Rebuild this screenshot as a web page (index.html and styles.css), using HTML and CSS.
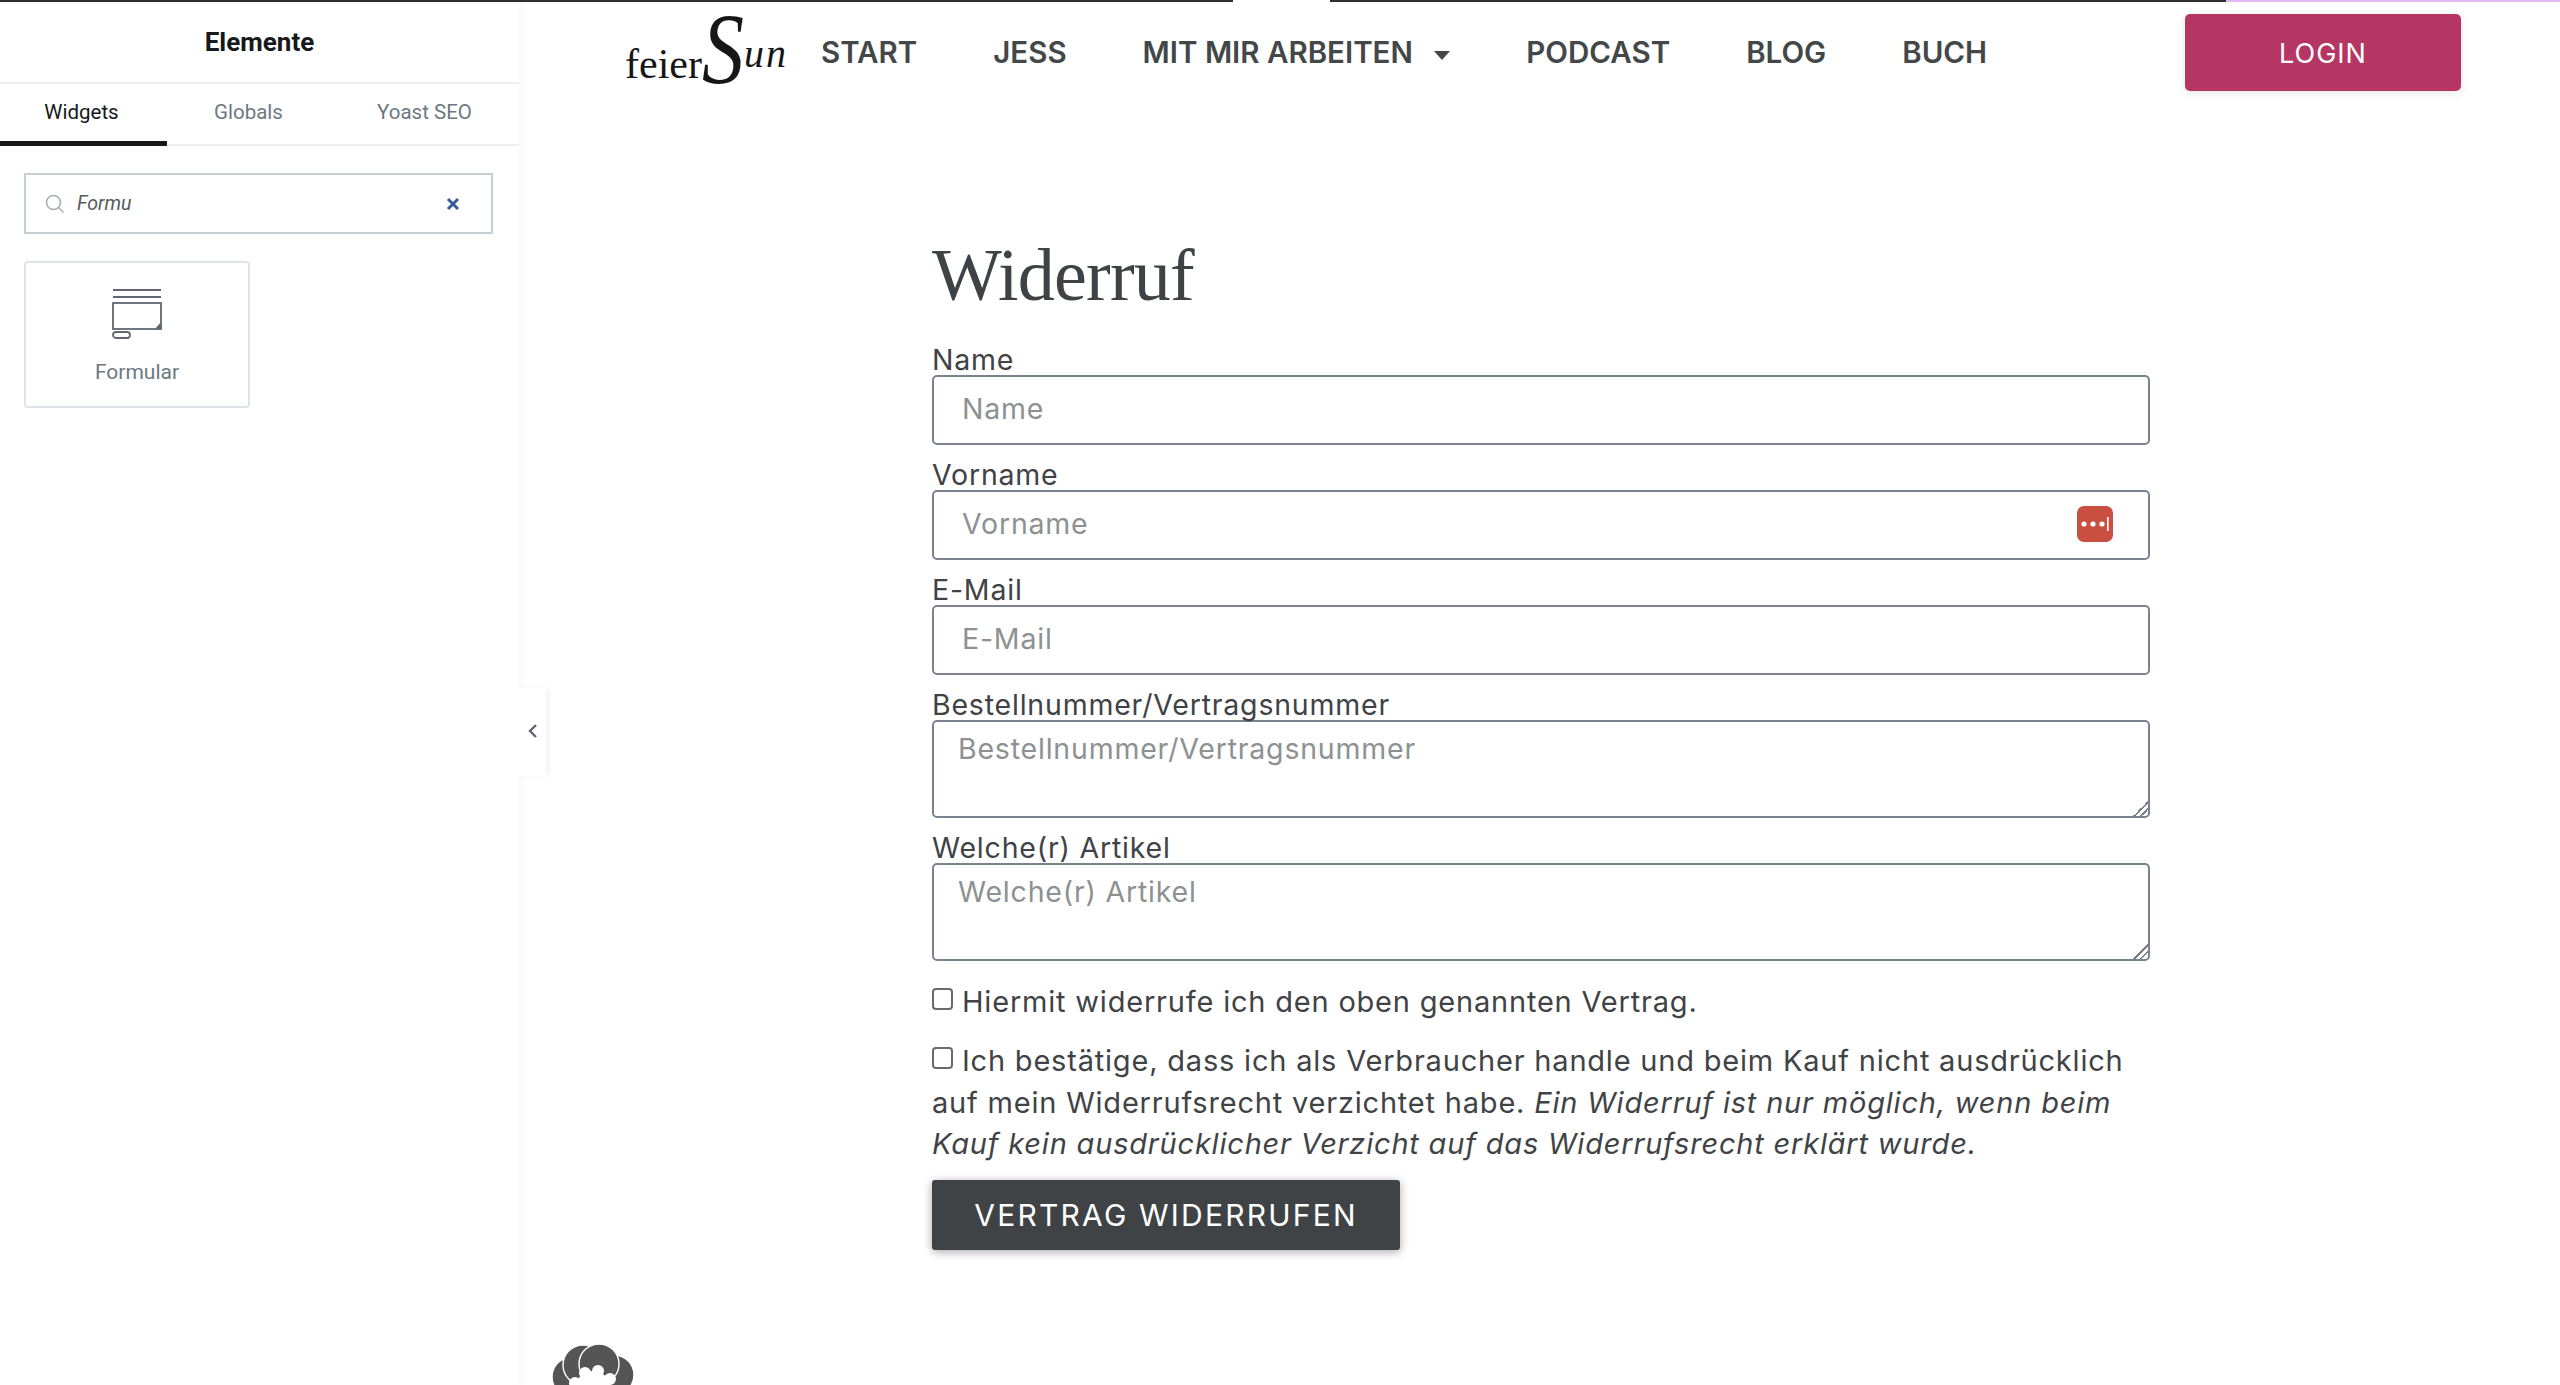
FILE: index.html
```html
<!DOCTYPE html>
<html lang="de">
<head>
  <meta charset="UTF-8">
  <title>Widerruf</title>
  <meta name="viewport" content="width=device-width, initial-scale=1.0">
  <link rel="stylesheet" href="styles.css">
</head>
<body>

  <div class="topline">
    <span class="seg-dark seg-a"></span>
    <span class="seg-gap"></span>
    <span class="seg-dark seg-b"></span>
    <span class="seg-lilac"></span>
  </div>

  <div class="editor">
    <aside class="sidebar">
      <div class="side-title">Elemente</div>
      <div class="tabs">
        <a class="tab active">Widgets</a>
        <a class="tab">Globals</a>
        <a class="tab">Yoast SEO</a>
      </div>
      <div class="search">
        <svg class="search-icon" width="20" height="20" viewBox="0 0 20 20" fill="none" stroke="#a9afb5" stroke-width="1.6"><circle cx="8.5" cy="8.5" r="7"/><path d="M13.5 13.5l5 5"/></svg>
        <span class="search-text">Formu</span>
        <svg class="search-clear" width="14" height="14" viewBox="0 0 14 14" fill="none" stroke="#3b5a9a" stroke-width="3"><path d="M2 2l10 10M12 2L2 12"/></svg>
      </div>
      <div class="widget-card">
        <svg width="50" height="50" viewBox="0 0 50 50" fill="none" stroke="#5f6872" stroke-width="1.8">
          <path d="M1 1h48M1 8h48"/>
          <rect x="1" y="14" width="48" height="26"/>
          <path d="M49 33l-6 7h6z" fill="#5f6872" stroke="none"/>
          <rect x="1" y="43" width="17" height="6" rx="3"/>
        </svg>
        <span class="widget-name">Formular</span>
      </div>
      <button class="collapse" aria-label="Einklappen">
        <svg width="10" height="16" viewBox="0 0 10 16" fill="none" stroke="#5f6872" stroke-width="2.4"><path d="M8 2L2 8l6 6"/></svg>
      </button>
    </aside>

    <main class="page">
      <header class="site-header">
        <a class="logo"><span class="logo-feier">feier</span><span class="logo-s">S</span><span class="logo-un">un</span></a>
        <nav class="menu">
          <a>START</a>
          <a>JESS</a>
          <a class="has-caret">MIT MIR ARBEITEN <i class="caret"></i></a>
          <a>PODCAST</a>
          <a>BLOG</a>
          <a>BUCH</a>
        </nav>
        <a class="login">LOGIN</a>
      </header>

      <form class="withdraw">
        <h1>Widerruf</h1>

        <div class="field">
          <label for="f-name">Name</label>
          <input id="f-name" type="text" placeholder="Name">
        </div>
        <div class="field">
          <label for="f-vorname">Vorname</label>
          <div class="input-wrap">
            <input id="f-vorname" type="text" placeholder="Vorname">
            <svg class="pw-badge" width="36" height="36" viewBox="0 0 36 36">
              <rect width="36" height="36" rx="7" fill="#c95040"/>
              <circle cx="7" cy="18" r="2.6" fill="#fff"/>
              <circle cx="16" cy="18" r="2.6" fill="#fff"/>
              <circle cx="25" cy="18" r="2.6" fill="#fff"/>
              <rect x="30" y="11" width="1.6" height="14" fill="#fff"/>
            </svg>
          </div>
        </div>
        <div class="field">
          <label for="f-mail">E-Mail</label>
          <input id="f-mail" type="text" placeholder="E-Mail">
        </div>
        <div class="field">
          <label for="f-nummer">Bestellnummer/Vertragsnummer</label>
          <textarea id="f-nummer" placeholder="Bestellnummer/Vertragsnummer"></textarea>
        </div>
        <div class="field">
          <label for="f-artikel">Welche(r) Artikel</label>
          <textarea id="f-artikel" placeholder="Welche(r) Artikel"></textarea>
        </div>

        <p class="check first"><input type="checkbox">Hiermit widerrufe ich den oben genannten Vertrag.</p>
        <p class="check"><input type="checkbox">Ich bestätige, dass ich als Verbraucher handle und beim Kauf nicht ausdrücklich auf mein Widerrufsrecht verzichtet habe. <em>Ein Widerruf ist nur möglich, wenn beim Kauf kein ausdrücklicher Verzicht auf das Widerrufsrecht erklärt wurde.</em></p>

        <button class="submit" type="button">VERTRAG WIDERRUFEN</button>
      </form>

      <svg class="flower" width="90" height="90" viewBox="0 0 90 90">
        <g fill="#555" stroke="#fff" stroke-width="1.4">
          <circle cx="24" cy="38" r="20"/>
          <circle cx="66" cy="36" r="20"/>
          <circle cx="35" cy="26" r="20"/>
          <circle cx="51" cy="25" r="20"/>
        </g>
        <g fill="#fff">
          <circle cx="45" cy="50" r="18"/>
          <circle cx="27" cy="44" r="6"/>
          <circle cx="37" cy="34" r="6"/>
          <circle cx="50" cy="32" r="6"/>
          <circle cx="62" cy="40" r="6"/>
        </g>
      </svg>
    </main>
  </div>

</body>
</html>
```

FILE: styles.css
```css
html, body {
  margin: 0;
  height: 1385px;
  overflow: hidden;
  background: #fff;
}

body {
  font-family: Inter, "Noto Sans", sans-serif;
  color: #3f4345;
}

.topline {
  display: flex;
  height: 2px;
}

.seg-dark { background: #2e2f31; }
.seg-a { width: 1233px; }
.seg-gap { width: 97px; }
.seg-b { width: 896px; }
.seg-lilac { flex: 1; background: #e3b8f2; }

.editor {
  display: flex;
  height: 1383px;
}

/* left panel */
.sidebar {
  position: relative;
  width: 519px;
  flex: none;
  font-family: Roboto, sans-serif;
  box-shadow: 3px 0 8px rgba(0, 0, 0, 0.04);
}

.side-title {
  height: 80px;
  line-height: 81px;
  text-align: center;
  font-size: 26px;
  font-weight: 700;
  color: #16181a;
  border-bottom: 2px solid #eceef0;
}

.tabs {
  display: grid;
  grid-template-columns: 167px 167px 1fr;
  height: 60px;
  border-bottom: 2px solid #eceef0;
}

.tab {
  box-sizing: border-box;
  padding-right: 4px;
  text-align: center;
  font-size: 20.5px;
  line-height: 56px;
  color: #6d7882;
}

.tab.active {
  color: #16181a;
  height: 62px;
  border-bottom: 5px solid #16181a;
}

.search {
  display: flex;
  align-items: center;
  box-sizing: border-box;
  height: 61px;
  margin: 27px 26px 27px 24px;
  padding: 0 31px 0 19px;
  border: 2px solid #c8ced5;
}

.search-text {
  margin-left: 12px;
  font-size: 19.5px;
  font-style: italic;
  color: #555a60;
}

.search-clear { margin-left: auto; }

.widget-card {
  display: flex;
  flex-direction: column;
  align-items: center;
  box-sizing: border-box;
  width: 226px;
  height: 147px;
  margin-left: 24px;
  padding-top: 26px;
  border: 2px solid #dfe2e6;
  border-radius: 4px;
}

.widget-name {
  margin-top: 21px;
  font-size: 21px;
  color: #6d7882;
}

.collapse {
  position: absolute;
  left: 519px;
  top: 686px;
  width: 27px;
  height: 88px;
  padding: 0;
  border: 0;
  background: #fff;
  box-shadow: 3px 0 6px rgba(0, 0, 0, 0.05);
}

/* site */
.page {
  flex: 1;
  min-width: 0;
}

.site-header {
  display: flex;
  align-items: flex-start;
  padding: 12px 99px 0 106px;
  height: 77px;
}

.logo {
  display: flex;
  align-items: baseline;
  width: 196px;
  height: 90px;
  margin-top: -9px;
  color: #161616;
  font-family: "Liberation Serif", serif;
}

.logo-feier {
  font-size: 42px;
  line-height: 90px;
}

.logo-s {
  font-style: italic;
  font-size: 84px;
  line-height: 90px;
  transform: scaleY(1.2);
}

.logo-un {
  font-style: italic;
  font-size: 40px;
  line-height: 90px;
  letter-spacing: 2px;
  transform: translateY(-11px);
}

.menu {
  display: flex;
  gap: 76px;
  font-size: 29.5px;
  font-weight: 600;
  line-height: 76px;
  color: #434748;
}

.caret {
  display: inline-block;
  width: 0;
  height: 0;
  margin-left: 14px;
  vertical-align: 3px;
  border: 8px solid transparent;
  border-top: 9px solid #434748;
  border-bottom: 0;
}

.login {
  margin-left: auto;
  width: 276px;
  height: 77px;
  line-height: 80px;
  text-align: center;
  font-size: 27px;
  letter-spacing: 1px;
  color: #fff;
  background: #b53662;
  border-radius: 5px;
  box-shadow: 0 2px 10px rgba(0, 0, 0, 0.1);
}

/* form */
.withdraw {
  width: 1218px;
  margin-left: 413px;
  font-size: 28.5px;
  letter-spacing: 0.8px;
}

h1 {
  margin: 0;
  padding-top: 132px;
  height: 122px;
  line-height: 104px;
  font-family: "Liberation Serif", serif;
  font-size: 74px;
  font-weight: 400;
  letter-spacing: -0.8px;
  color: #3f4345;
}

.field label {
  display: block;
  line-height: 30px;
}

.field + .field { margin-top: 15px; }

.input-wrap { position: relative; }

input[type="text"], textarea {
  display: block;
  box-sizing: border-box;
  width: 100%;
  border: 2px solid #7b8391;
  border-radius: 5px;
  background: #fff;
  font: inherit;
  letter-spacing: inherit;
  color: #3f4345;
  outline: none;
}

input[type="text"] {
  height: 70px;
  padding: 0 28px 3px;
}

textarea {
  height: 98px;
  padding: 9px 24px;
}

textarea::-webkit-resizer {
  background: linear-gradient(135deg, transparent 50%, #7b7f85 50%, #7b7f85 58%, transparent 58%, transparent 72%, #7b7f85 72%, #7b7f85 80%, transparent 80%);
}

::placeholder {
  color: #8d9192;
  opacity: 1;
}

.pw-badge {
  position: absolute;
  right: 37px;
  top: 16px;
}

.check {
  margin: 0 0 18px;
  font-size: 29px;
  line-height: 41.3px;
  letter-spacing: 0.8px;
}

.check.first { margin-top: 20px; }

.check input {
  appearance: none;
  box-sizing: border-box;
  width: 21px;
  height: 22px;
  margin: 0 9px 2px 0;
  border: 2px solid #6a6a6a;
  border-radius: 4px;
  background: #fff;
}

.check em { font-style: italic; }

.submit {
  display: block;
  width: 468px;
  height: 70px;
  margin-top: -2px;
  padding: 0;
  border: 0;
  border-radius: 3px;
  background: #3f4345;
  color: #fff;
  font: 400 30px Inter, sans-serif;
  letter-spacing: 2.2px;
  box-shadow: 0 2px 10px rgba(0, 0, 0, 0.35);
}

.flower {
  display: block;
  margin: 89px 0 0 29px;
}
```
